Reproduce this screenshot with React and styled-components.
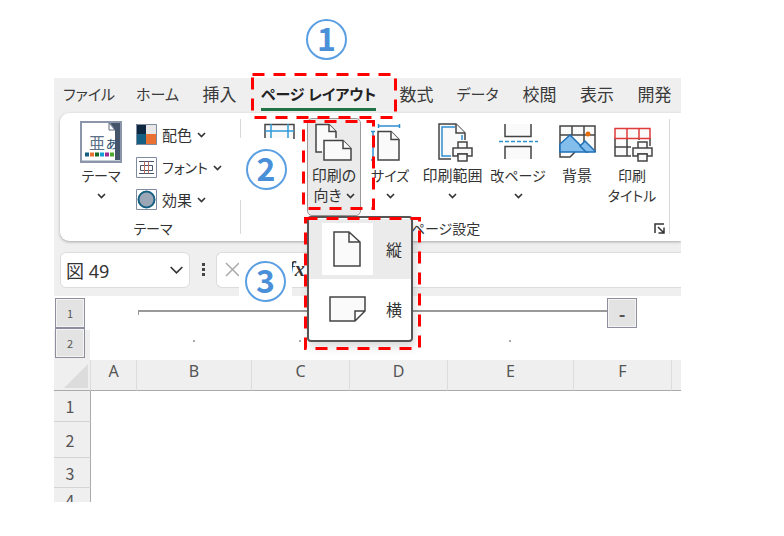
import React from 'react';
import styled, { createGlobalStyle } from 'styled-components';

const GlobalStyle = createGlobalStyle`
    * {
        box-sizing: border-box;
    }
    body {
        margin: 0;
        background: #fff;
        color: #333;
        font-family: "Noto Sans CJK JP", sans-serif;
        font-feature-settings: "palt";
    }
    button, input {
        font: inherit;
        font-feature-settings: inherit;
        color: inherit;
        border: 0;
        padding: 0;
        margin: 0;
        background: none;
    }
    svg {
        display: block;
        flex: none;
    }
`;

const Stage = styled.main`
    position: relative;
    padding: 78px 103px 34px 54px;
`;

const Workbook = styled.section`
    background: #efefef;
    overflow: hidden;
`;

const Tabs = styled.nav`
    display: flex;
    height: 35px;
    white-space: nowrap;
`;

const Tab = styled.button`
    flex: none;
    display: flex;
    justify-content: center;
    align-items: center;
    width: ${({ $width }) => $width}px;
    font-size: ${({ $kana }) => $kana ? 15 : 17}px;
    font-weight: ${({ $active }) => $active ? 700 : 400};
    color: ${({ $active }) => $active ? '#222' : '#3a3a3a'};
`;

const TabText = styled.span`
    line-height: 28px;
    border-bottom: 3px solid ${({ $active }) => $active ? '#217346' : 'transparent'};
`;

const Ribbon = styled.div`
    display: flex;
    height: 128px;
    margin-left: 6px;
    background: #fff;
    border-radius: 9px 0 0 9px;
    box-shadow: 0 1px 3px rgba(0, 0, 0, .3);
`;

const Group = styled.section`
    flex: none;
    display: flex;
    flex-direction: column;
    width: ${({ $width }) => $width}px;
    padding: 5px 0 0 ${({ $indent }) => $indent}px;
`;

const Divider = styled.div`
    flex: none;
    width: 1px;
    margin: 6px 0 7px;
    background: #d8d8d8;
`;

const GroupBody = styled.div`
    display: flex;
    height: 98px;
`;

const GroupFooter = styled.div`
    display: flex;
    justify-content: center;
    align-items: center;
    height: 24px;
    font-size: 14px;
`;

const FooterText = styled.span`
    flex: 1;
    padding-right: 16px;
    text-align: center;
`;

const Launcher = styled.button`
    margin-right: 4px;
`;

const BigWrap = styled.div`
    position: relative;
    flex: none;
    width: ${({ $width }) => $width}px;
`;

const BigButton = styled.button`
    display: flex;
    flex-direction: column;
    align-items: center;
    width: 100%;
    height: 98px;
    padding-top: 2px;
    border: 1px solid ${({ $open }) => $open ? '#999' : 'transparent'};
    border-radius: 5px;
    background: ${({ $open }) => $open ? '#ebebeb' : 'none'};
    font-size: 15px;
    line-height: 20px;
    white-space: nowrap;
`;

const LabelLine = styled.span`
    display: flex;
    align-items: center;
    gap: 4px;
    height: 20px;
    font-size: ${({ $kana }) => $kana ? 14 : 15}px;
`;

const SmallList = styled.div`
    display: flex;
    flex-direction: column;
`;

const SmallButton = styled.button`
    display: flex;
    align-items: center;
    gap: 5px;
    height: 33px;
    font-size: ${({ $kana }) => $kana ? 14 : 15}px;
    white-space: nowrap;
`;

const Menu = styled.div`
    position: absolute;
    z-index: 2;
    top: 98px;
    left: 0;
    width: 106px;
    padding: 1px 0;
    border: 2px solid #555;
    border-radius: 4px;
    background: #fff;
    box-shadow: 2px 5px 10px rgba(0, 0, 0, .15);
`;

const MenuItem = styled.button`
    display: flex;
    align-items: center;
    gap: 13px;
    width: 100%;
    height: 60px;
    padding-left: 13px;
    font-size: 16px;
    background: ${({ $active }) => $active ? '#ebebeb' : '#fff'};
`;

const MenuIcon = styled.span`
    background: ${({ $active }) => $active ? '#fff' : 'none'};
`;

const FormulaRow = styled.div`
    display: flex;
    align-items: center;
    height: 55px;
    padding: 2px 0 0 6px;
`;

const NameBox = styled.div`
    flex: none;
    display: flex;
    align-items: center;
    width: 130px;
    height: 36px;
    padding: 0 5px;
    background: #fff;
    border: 1px solid #dcdcdc;
    border-radius: 6px;
`;

const NameInput = styled.input`
    flex: 1;
    min-width: 0;
    font-family: "Noto Sans", "Noto Sans CJK JP", sans-serif;
    font-size: 18px;
`;

const Grip = styled.span`
    display: flex;
    flex-direction: column;
    align-items: center;
    gap: 2px;
    width: 26px;
    & i {
        width: 3px;
        height: 3px;
        background: #444;
    }
`;

const FormulaBox = styled.div`
    flex: 1;
    display: flex;
    align-items: center;
    height: 36px;
    padding-left: 8px;
    background: #fff;
    border: 1px solid #dcdcdc;
    border-right: 0;
    border-radius: 6px 0 0 6px;
`;

const FxButton = styled.button`
    margin-left: 48px;
    font: italic 700 20px "Liberation Serif", serif;
`;

const FormulaInput = styled.input`
    flex: 1;
    min-width: 0;
    padding-left: 8px;
`;

const Outline = styled.div`
    display: flex;
    height: 64px;
    background: #fff;
`;

const Levels = styled.div`
    flex: none;
    width: 36px;
    padding: 2px 0 0 1px;
    background: linear-gradient(#fff 34px, #efefef 34px);
`;

const OutlineButton = styled.button`
    display: block;
    flex: none;
    width: 30px;
    height: 30px;
    border: 1px solid #8d8f9c;
    box-shadow: inset 0 0 0 1px #f4f4f4;
    background: #e3e3e3;
    font-size: ${({ $sign }) => $sign ? 18 : 11}px;
    font-weight: ${({ $sign }) => $sign ? 700 : 400};
    line-height: 24px;
    color: #555;
`;

const Tracks = styled.div`
    flex: 1;
    min-width: 0;
    padding-top: 2px;
`;

const Track = styled.div`
    display: flex;
    align-items: flex-start;
    height: 30px;
    padding-left: 48px;
`;

const Bracket = styled.div`
    flex: none;
    width: 469px;
    height: 5px;
    margin-top: 12px;
    border: solid #999;
    border-width: 2px 0 0 1px;
`;

const Dots = styled.div`
    display: flex;
    padding-top: 12px;
`;

const DotCell = styled.span`
    flex: none;
    width: ${({ $width }) => $width}px;
    &::after {
        content: "";
        display: block;
        width: 2px;
        height: 2px;
        margin: 0 auto;
        background: ${({ $dot }) => $dot ? '#aaa' : 'transparent'};
    }
`;

const Sheet = styled.table`
    width: 100%;
    table-layout: fixed;
    border-collapse: separate;
    border-spacing: 0;
    background: #fff;
    & th, & td {
        padding: 0;
    }
`;

const ColHead = styled.th`
    width: ${({ $width }) => $width ? $width + 'px' : 'auto'};
    height: 31px;
    background: #efefef;
    border-right: 1px solid #dcdcdc;
    border-bottom: 1px solid #aaa;
    font-family: "Noto Sans", sans-serif;
    font-size: 16px;
    font-weight: 400;
    line-height: 22px;
    vertical-align: top;
    color: #555;
    &:last-child {
        border-right: 0;
    }
`;

const Corner = styled(ColHead)`
    vertical-align: bottom;
    & svg {
        margin: 0 2px 2px auto;
    }
`;

const RowHead = styled.th`
    height: ${({ $height }) => $height}px;
    background: #efefef;
    border-right: 1px solid #aaa;
    border-bottom: ${({ $cut }) => $cut ? 0 : 1}px solid #d4d4d4;
    font-size: 16px;
    font-weight: 400;
    line-height: 24px;
    color: #555;
`;

const RowNumber = styled.div`
    height: ${({ $cut }) => $cut ? 14 : 24}px;
    padding-right: 4px;
    overflow: ${({ $cut }) => $cut ? 'hidden' : 'visible'};
`;

const Patch = styled.div`
    position: absolute;
    z-index: 3;
    top: ${({ $top }) => $top}px;
    left: ${({ $left }) => $left}px;
    display: flex;
    justify-content: center;
    align-items: center;
    width: ${({ $width }) => $width}px;
    height: ${({ $height }) => $height}px;
    background: #fff;
`;

const StepNumber = styled.span`
    width: 41px;
    height: 41px;
    border: 2px solid #5b9fe3;
    border-radius: 50%;
    font-size: 32px;
    font-weight: 700;
    line-height: 33px;
    text-align: center;
    color: #4a90d9;
`;

const Marker = styled.svg`
    position: absolute;
    z-index: 4;
    top: ${({ $top }) => $top}px;
    left: ${({ $left }) => $left}px;
    pointer-events: none;
`;

const tabs = [
    { name: 'ファイル', width: 70, kana: true },
    { name: 'ホーム', width: 67, kana: true },
    { name: '挿入', width: 57 },
    { name: 'ページ レイアウト', width: 141, kana: true, active: true },
    { name: '数式', width: 55 },
    { name: 'データ', width: 67, kana: true },
    { name: '校閲', width: 57 },
    { name: '表示', width: 58 },
    { name: '開発', width: 57 },
];

const columns = [
    { name: 'A', width: 46 },
    { name: 'B', width: 115, dot: true },
    { name: 'C', width: 98, dot: true },
    { name: 'D', width: 98 },
    { name: 'E', width: 126, dot: true },
    { name: 'F', width: 98 },
];

const rows = [
    { name: '1', height: 31 },
    { name: '2', height: 36 },
    { name: '3', height: 30 },
    { name: '4', height: 14, cut: true },
];

const steps = [
    { name: '1', top: 14, left: 300, width: 53, height: 50 },
    { name: '2', top: 138, left: 239, width: 54, height: 62 },
    { name: '3', top: 256, left: 239, width: 53, height: 50 },
];

const markers = [
    { top: 73, left: 251, width: 143, height: 43 },
    { top: 120, left: 302, width: 70, height: 87 },
    { top: 217, left: 304, width: 114, height: 130 },
];

const swatches = ['#156082', '#e97132', '#196b24', '#0f9ed5', '#a02b93', '#4ea72e'];

const Chevron = ({ size = 9 }) => (
    <svg width={size} height={size} viewBox="0 0 9 9" fill="none" stroke="#333" strokeWidth={size > 9 ? 1 : 1.6}>
        <path d="M1 3l3.500 3.500L8 3" />
    </svg>
);

const Icon = ({ children }) => (
    <svg width="44" height="44" viewBox="0 0 44 44" fill="#fafafa" stroke="#444" strokeWidth="1.5">
        {children}
    </svg>
);

const Printer = ({ x, y }) => (
    <g transform={`translate(${x} ${y})`}>
        <path d="M-2 4h6v-6h12v6h4v14h-4v5H4v-5h-6z" fill="#fff" stroke="none" />
        <path d="M5 6V0h9v6" />
        <path d="M0 6h19v8h-5v-2H5v2H0z" />
        <path d="M5 12h9v7H5z" />
    </g>
);

const ThemeIcon = () => (
    <svg width="44" height="44" viewBox="0 0 44 44">
        <rect x="2" y="1" width="40" height="40" fill="#fff" stroke="#8b96aa" strokeWidth="2" />
        <text x="10" y="28" fontSize="16" fill="#5c7187">亜</text>
        <text x="27" y="28" fontSize="12" fill="#1f4e6b">あ</text>
        <path d="M31 2h10v38h-5V9z" fill="#44546a" />
        <path d="M30 2v7h6z" fill="#fff" stroke="#5c6a80" />
        <path d="M3 39.500h38" stroke="#c5cbd5" />
        {swatches.map((color, index) => (
            <rect key={color} x={6 + index * 5} y="31.500" width="4" height="4" fill={color} />
        ))}
    </svg>
);

const MarginsIcon = () => (
    <Icon>
        <path d="M7 18V3.500h29V18" />
        <path d="M13 3v15M30 3v15M7 10h29" stroke="#2e9bd8" />
    </Icon>
);

const OrientationIcon = () => (
    <Icon>
        <path d="M10 31H4V3.500h13l7 7V17" />
        <path d="M17 3.500V10.500h7" />
        <path d="M12 19.500h19l8 8V39H12z" />
        <path d="M31 19.500v8h8" />
    </Icon>
);

const SizeIcon = () => (
    <Icon>
        <path d="M10 10.500h13l8 8V39H10z" />
        <path d="M23 10.500v8h8" />
        <path d="M10.500 5h21M10.500 3v4M31.500 3v4M5 10.500V39M3 10.500h4M3 39h4" stroke="#2e8fcf" />
    </Icon>
);

const PrintAreaIcon = () => (
    <Icon>
        <path d="M34 22V12l-9-9H8v35h14" />
        <path d="M22 35H11V6h13M31 14v8" stroke="#2e8fcf" fill="none" />
        <path d="M25 3v9h9" />
        <Printer x="22" y="21" />
    </Icon>
);

const BreaksIcon = () => (
    <Icon>
        <path d="M9 3v12.500h26V3M9 38V25.500h26V38" />
        <path d="M3 20.500h39" stroke="#2e8fcf" strokeDasharray="4 2" />
    </Icon>
);

const BackgroundIcon = () => (
    <Icon>
        <path d="M5 31V5h35v26M5 30v6h10l5-5M17 5v9M29 5v21M5 14h35" />
        <circle cx="33" cy="13" r="2.500" fill="#e36c0a" stroke="none" />
        <path d="M5 31V23l10-9 17 17z" fill="#83bdec" stroke="#1f6fb5" />
        <path d="M25 25l5-5 10 10v1H31z" fill="#83bdec" stroke="#1f6fb5" />
    </Icon>
);

const TitlesIcon = () => (
    <Icon>
        <path d="M5 17v18h20M17 17v18M29 17v10M40 17v8M5 26h24" />
        <path d="M5 7.500h35v10H5zM17 7.500v10M29 7.500v10" stroke="#e03b3b" />
        <Printer x="23" y="21" />
    </Icon>
);

const ColorsIcon = () => (
    <svg width="21" height="21" viewBox="0 0 21 21">
        <path d="M0 0h10v10H0z" fill="#0e2841" />
        <path d="M10 0h11v10H10z" fill="#e8e8e8" />
        <path d="M0 10h10v11H0z" fill="#156082" />
        <path d="M10 10h11v11H10z" fill="#e97132" />
        <path d="M.5.500h20v20H.5z" fill="none" stroke="#7f8ca0" />
    </svg>
);

const FontsIcon = () => (
    <svg width="21" height="21" viewBox="0 0 21 21" fill="#fff" stroke="#7f8ca0">
        <path d="M.5.500h20v20H.5z" />
        <path d="M3 4.500h15M3 16.500h15M4.500 8.500h12v5h-12z" stroke="#44546a" />
        <path d="M8.500 4.500v12M12.500 4.500v12" stroke="#c0705a" />
    </svg>
);

const EffectsIcon = () => (
    <svg width="21" height="21" viewBox="0 0 21 21" fill="#fff" stroke="#7f8ca0">
        <path d="M.5.500h20v20H.5z" />
        <circle cx="10.500" cy="10.500" r="8" fill="#9ba6b6" stroke="#156082" strokeWidth="2" />
    </svg>
);

const PortraitIcon = () => (
    <svg width="51" height="52" viewBox="0 0 51 52" fill="#fafafa" stroke="#444" strokeWidth="1.500">
        <path d="M12 9h15l11 10v24H12zM27 9v10h11" />
    </svg>
);

const LandscapeIcon = () => (
    <svg width="51" height="52" viewBox="0 0 51 52" fill="#fafafa" stroke="#444" strokeWidth="1.500">
        <path d="M8 14h35v14L33 38H8zM43 28H33v10" />
    </svg>
);

const pageTools = [
    { name: '余白', width: 54, Art: MarginsIcon, lines: [] },
    { name: '印刷の向き', width: 54, Art: OrientationIcon, lines: ['印刷の', '向き'], arrow: true, open: true },
    { name: 'サイズ', width: 58, Art: SizeIcon, lines: ['サイズ', ''], arrow: true, kana: true },
    { name: '印刷範囲', width: 67, Art: PrintAreaIcon, lines: ['印刷範囲', ''], arrow: true },
    { name: '改ページ', width: 64, Art: BreaksIcon, lines: ['改ページ', ''], arrow: true, kana: true },
    { name: '背景', width: 54, Art: BackgroundIcon, lines: ['背景'] },
    { name: '印刷タイトル', width: 56, Art: TitlesIcon, lines: ['印刷', 'タイトル'], kana: true },
];

const smallTools = [
    { name: '配色', Art: ColorsIcon },
    { name: 'フォント', Art: FontsIcon, kana: true },
    { name: '効果', Art: EffectsIcon },
];

const OrientationMenu = () => (
    <Menu role="menu">
        <MenuItem role="menuitem" $active>
            <MenuIcon $active><PortraitIcon /></MenuIcon>
            縦
        </MenuItem>
        <MenuItem role="menuitem">
            <MenuIcon><LandscapeIcon /></MenuIcon>
            横
        </MenuItem>
    </Menu>
);

const BigTool = ({ name, width, Art, lines, arrow, kana, open }) => (
    <BigWrap $width={width}>
        <BigButton aria-label={name} $open={open}>
            <Art />
            {lines.map((line, index) => (
                <LabelLine key={index} $kana={kana}>
                    {line}
                    {arrow && index === 1 && <Chevron />}
                </LabelLine>
            ))}
        </BigButton>
        {open && <OrientationMenu />}
    </BigWrap>
);

const App = () => (
    <Stage>
        <GlobalStyle />
        <Workbook>
            <Tabs>
                {tabs.map(({ name, width, kana, active }) => (
                    <Tab key={name} $width={width} $kana={kana} $active={active}>
                        <TabText $active={active}>{name}</TabText>
                    </Tab>
                ))}
            </Tabs>
            <Ribbon>
                <Group $width={180} $indent={6}>
                    <GroupBody>
                        <BigTool name="テーマ" width={70} Art={ThemeIcon} lines={['テーマ', '']} arrow kana />
                        <SmallList>
                            {smallTools.map(({ name, Art, kana }) => (
                                <SmallButton key={name} $kana={kana}>
                                    <Art />
                                    {name}
                                    <Chevron />
                                </SmallButton>
                            ))}
                        </SmallList>
                    </GroupBody>
                    <GroupFooter>テーマ</GroupFooter>
                </Group>
                <Divider />
                <Group $width={428} $indent={12}>
                    <GroupBody>
                        {pageTools.map(tool => <BigTool key={tool.name} {...tool} />)}
                    </GroupBody>
                    <GroupFooter>
                        <FooterText>ページ設定</FooterText>
                        <Launcher aria-label="ページ設定を開く">
                            <svg width="11" height="11" viewBox="0 0 11 11" fill="none" stroke="#333" strokeWidth="1.500">
                                <path d="M1 10V1h9M4 4l5.500 5.500M10 4.500V10H4.500" />
                            </svg>
                        </Launcher>
                    </GroupFooter>
                </Group>
                <Divider />
            </Ribbon>
            <FormulaRow>
                <NameBox>
                    <NameInput aria-label="名前ボックス" defaultValue="図 49" />
                    <Chevron size={15} />
                </NameBox>
                <Grip><i /><i /><i /></Grip>
                <FormulaBox>
                    <svg width="15" height="15" viewBox="0 0 15 15" stroke="#aaa" strokeWidth="1.500">
                        <path d="M1 1l13 13M14 1L1 14" />
                    </svg>
                    <FxButton>fx</FxButton>
                    <FormulaInput aria-label="数式バー" />
                </FormulaBox>
            </FormulaRow>
            <Outline>
                <Levels>
                    <OutlineButton>1</OutlineButton>
                    <OutlineButton>2</OutlineButton>
                </Levels>
                <Tracks>
                    <Track>
                        <Bracket />
                        <OutlineButton $sign>-</OutlineButton>
                    </Track>
                    <Dots>
                        {columns.map(({ name, width, dot }) => <DotCell key={name} $width={width} $dot={dot} />)}
                    </Dots>
                </Tracks>
            </Outline>
            <Sheet>
                <thead>
                    <tr>
                        <Corner $width={37}>
                            <svg width="24" height="24" viewBox="0 0 24 24">
                                <path d="M24 0v24H0z" fill="#dcdcdc" />
                            </svg>
                        </Corner>
                        {columns.map(({ name, width }) => <ColHead key={name} $width={width}>{name}</ColHead>)}
                        <ColHead />
                    </tr>
                </thead>
                <tbody>
                    {rows.map(({ name, height, cut }) => (
                        <tr key={name}>
                            <RowHead $height={height} $cut={cut}>
                                <RowNumber $cut={cut}>{name}</RowNumber>
                            </RowHead>
                            <td colSpan={7} />
                        </tr>
                    ))}
                </tbody>
            </Sheet>
        </Workbook>
        {steps.map(({ name, top, left, width, height }) => (
            <Patch key={name} $top={top} $left={left} $width={width} $height={height}>
                <StepNumber>{name}</StepNumber>
            </Patch>
        ))}
        {markers.map(({ top, left, width, height }) => (
            <Marker key={top} $top={top} $left={left} width={width + 3} height={height + 3}>
                <rect
                    x="1.500"
                    y="1.500"
                    width={width}
                    height={height}
                    fill="none"
                    stroke="#f00"
                    strokeWidth="3"
                    strokeDasharray="12 9"
                />
            </Marker>
        ))}
    </Stage>
);

export default App;
